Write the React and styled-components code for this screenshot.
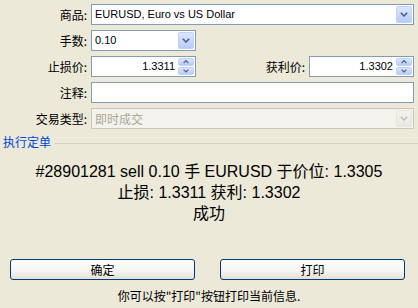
import React from "react";
import styled, { createGlobalStyle } from "styled-components";

const Global = createGlobalStyle`
  html, body {
    margin: 0;
    padding: 0;
    background: #ece9d8;
  }
  body {
    font-family: "Liberation Sans", "Noto Sans CJK SC", sans-serif;
    color: #000;
  }
`;

const Window = styled.div`
  width: 418px;
  height: 308px;
  background: #ece9d8;
  overflow: hidden;
  display: flex;
  flex-direction: column;
`;

const Form = styled.div`
  display: grid;
  grid-template-columns: 87px 105px 1fr 105px;
  grid-auto-rows: 21px;
  column-gap: 4px;
  row-gap: 5px;
  padding: 4px 4px 0 0;
`;

const Label = styled.label`
  font-family: "Noto Sans CJK SC", sans-serif;
  font-size: 12px;
  line-height: 21px;
  text-align: right;
  white-space: nowrap;
  grid-column: ${(p) => p.$col || "auto"};
`;

const Field = styled.div`
  grid-column: ${(p) => p.$span || "auto"};
  display: flex;
  align-items: stretch;
  box-sizing: border-box;
  height: 21px;
  border: 1px solid ${(p) => (p.$disabled ? "#c9c7ba" : "#7f9db9")};
  background: ${(p) => (p.$disabled ? "#f4f3ee" : "#fff")};
  padding: 1px;
`;

const Value = styled.span`
  flex: 1;
  font-family: "Liberation Sans", "Noto Sans CJK SC", sans-serif;
  font-size: 11px;
  line-height: 17px;
  padding: 0 ${(p) => (p.$right ? "3px" : "2px")};
  text-align: ${(p) => (p.$right ? "right" : "left")};
  color: ${(p) => (p.$disabled ? "#aca899" : "#000")};
  white-space: nowrap;
  overflow: hidden;
  ${(p) => p.$cjk && `font-family: "Noto Sans CJK SC", sans-serif; font-size: 12px;`}
`;

const DropButton = styled.div`
  width: 16px;
  box-sizing: border-box;
  border: 1px solid ${(p) => (p.$disabled ? "#e8e6dc" : "#c0d0f6")};
  border-radius: 2px;
  background: ${(p) =>
    p.$disabled
      ? "linear-gradient(#f4f3ee, #eae8e0)"
      : "linear-gradient(#dde7fc, #b7cbf6)"};
  display: flex;
  align-items: center;
  justify-content: center;
`;

const Spin = styled.div`
  width: 16px;
  display: flex;
  flex-direction: column;
  gap: 1px;
`;

const SpinHalf = styled.div`
  flex: 1;
  box-sizing: border-box;
  border: 1px solid #c0d0f6;
  border-radius: 2px;
  background: linear-gradient(#dde7fc, #b7cbf6);
  display: flex;
  align-items: center;
  justify-content: center;
`;

const Chevron = ({ up, color = "#4d6185", size = 8 }) => (
  <svg width={size} height={size * 0.6} viewBox="0 0 10 6">
    <path
      d={up ? "M1 5 L5 1 L9 5" : "M1 1 L5 5 L9 1"}
      fill="none"
      stroke={color}
      strokeWidth="2"
    />
  </svg>
);

const Select = ({ children, span, disabled, cjk }) => (
  <Field $span={span} $disabled={disabled}>
    <Value $disabled={disabled} $cjk={cjk}>
      {children}
    </Value>
    <DropButton $disabled={disabled}>
      <Chevron color={disabled ? "#c3c1b5" : "#4d6185"} />
    </DropButton>
  </Field>
);

const Spinner = ({ children }) => (
  <Field>
    <Value $right>{children}</Value>
    <Spin>
      <SpinHalf>
        <Chevron up size={6} />
      </SpinHalf>
      <SpinHalf>
        <Chevron size={6} />
      </SpinHalf>
    </Spin>
  </Field>
);

const GroupHead = styled.div`
  display: flex;
  align-items: center;
  gap: 4px;
  margin-top: 6px;
  padding-left: 3px;
  height: 14px;
`;

const GroupTitle = styled.span`
  font-family: "Noto Sans CJK SC", sans-serif;
  font-size: 12px;
  line-height: 14px;
  color: #0046d5;
  white-space: nowrap;
`;

const GroupLine = styled.div`
  flex: 1;
  height: 1px;
  background: #d0d0bf;
  margin-top: 2px;
`;

const Message = styled.div`
  margin-top: 12px;
  text-align: center;
  font-family: "Liberation Sans", "Noto Sans CJK SC", sans-serif;
  font-size: 16px;
  line-height: 21px;
`;

const Buttons = styled.div`
  display: flex;
  gap: 25px;
  padding: 0 13px 0 10px;
  margin-top: 35px;
`;

const Button = styled.button`
  flex: 1;
  height: 21px;
  box-sizing: border-box;
  border: 1px solid #003c74;
  border-radius: 3px;
  background: linear-gradient(#ffffff 0%, #f4f4f0 60%, #e3e0d6 100%);
  font-family: "Noto Sans CJK SC", sans-serif;
  font-size: 12px;
  line-height: 17px;
  padding: 0;
  color: #000;
`;

const Footer = styled.div`
  margin-top: 8px;
  text-align: center;
  font-family: "Noto Sans CJK SC", sans-serif;
  font-size: 12px;
  line-height: 16px;
`;

export default function App() {
  return (
    <Window>
      <Global />
      <Form>
        <Label>商品:</Label>
        <Select span="2 / 5">EURUSD, Euro vs US Dollar</Select>

        <Label $col="1">手数:</Label>
        <Select>0.10</Select>

        <Label $col="1">止损价:</Label>
        <Spinner>1.3311</Spinner>
        <Label>获利价:</Label>
        <Spinner>1.3302</Spinner>

        <Label $col="1">注释:</Label>
        <Field $span="2 / 5" />

        <Label $col="1">交易类型:</Label>
        <Select span="2 / 5" disabled cjk>
          即时成交
        </Select>
      </Form>

      <GroupHead>
        <GroupTitle>执行定单</GroupTitle>
        <GroupLine />
      </GroupHead>

      <Message>
        <div>#28901281 sell 0.10 手 EURUSD 于价位: 1.3305</div>
        <div>止损: 1.3311 获利: 1.3302</div>
        <div>成功</div>
      </Message>

      <Buttons>
        <Button>确定</Button>
        <Button>打印</Button>
      </Buttons>

      <Footer>你可以按"打印"按钮打印当前信息.</Footer>
    </Window>
  );
}
